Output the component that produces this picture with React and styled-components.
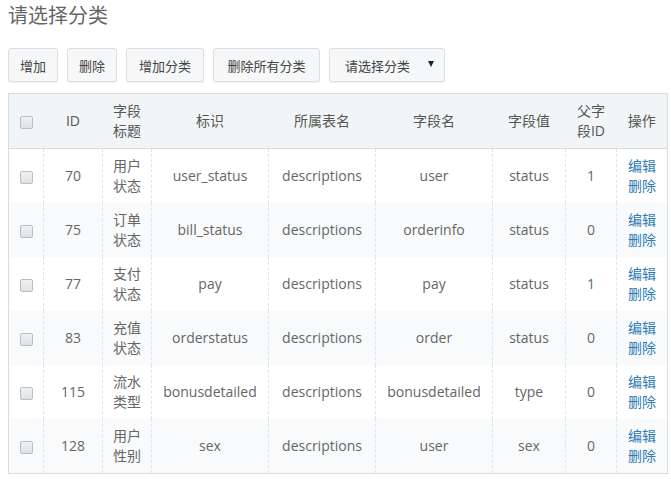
import React from "react";
import styled, { createGlobalStyle } from "styled-components";

const Global = createGlobalStyle`
  body {
    margin: 0;
    background: #fff;
    font-family: "Open Sans", "Noto Sans CJK SC", sans-serif;
    color: #666;
  }
`;

const Page = styled.div`
  padding: 0 8px;
`;

const Title = styled.h2`
  margin: 4px 0 0;
  font-size: 20px;
  line-height: 24px;
  font-weight: normal;
  color: #666;
`;

const Toolbar = styled.div`
  display: flex;
  gap: 9px;
  margin-top: 20px;
`;

const Button = styled.div`
  box-sizing: border-box;
  height: 34px;
  width: ${(p) => p.w}px;
  display: flex;
  align-items: center;
  justify-content: center;
  background: #f6f7f8;
  border: 1px solid #dcdfe2;
  border-radius: 3px;
  box-shadow: 0 1px 1px rgba(0, 0, 0, 0.06);
  font-size: 13px;
  color: #444;
`;

const Select = styled(Button)`
  justify-content: space-between;
  padding: 0 10px 0 15px;
`;

const Caret = styled.span`
  width: 0;
  height: 0;
  border-left: 3px solid transparent;
  border-right: 3px solid transparent;
  border-top: 6px solid #222;
  margin-top: -2px;
`;

const Table = styled.table`
  margin-top: 11px;
  width: 659px;
  table-layout: fixed;
  border-collapse: collapse;
  border: 1px solid #d5dde2;
  font-size: 14px;
`;

const Th = styled.th`
  height: 54px;
  background: #f1f5f7;
  border-bottom: 1px solid #d5dde2;
  font-weight: normal;
  color: #555;
  line-height: 20px;
  text-align: center;
  padding: 0;
`;

const Row = styled.tr`
  background: ${(p) => (p.$odd ? "#f8fafb" : "#fff")};
`;

const Td = styled.td`
  height: 54px;
  padding: 0;
  text-align: center;
  color: #666;
  line-height: 20px;
  border-left: 1px dashed #e2e6e9;
  &:first-child {
    border-left: none;
  }
`;

const Check = styled.span`
  display: inline-block;
  width: 11px;
  height: 11px;
  border: 1px solid #b9bec2;
  border-radius: 2px;
  background: linear-gradient(#f0f1f2, #dfe2e4);
  vertical-align: middle;
`;

const Link = styled.a`
  display: block;
  color: #2f7bb5;
  text-decoration: none;
`;

const rows = [
  ["70", "用户", "状态", "user_status", "descriptions", "user", "status", "1"],
  ["75", "订单", "状态", "bill_status", "descriptions", "orderinfo", "status", "0"],
  ["77", "支付", "状态", "pay", "descriptions", "pay", "status", "1"],
  ["83", "充值", "状态", "orderstatus", "descriptions", "order", "status", "0"],
  ["115", "流水", "类型", "bonusdetailed", "descriptions", "bonusdetailed", "type", "0"],
  ["128", "用户", "性别", "sex", "descriptions", "user", "sex", "0"],
];

const widths = [35, 59, 49, 117, 107, 117, 73, 51, 51];

export default function App() {
  return (
    <Page>
      <Global />
      <Title>请选择分类</Title>
      <Toolbar>
        <Button w={50}>增加</Button>
        <Button w={50}>删除</Button>
        <Button w={78}>增加分类</Button>
        <Button w={107}>删除所有分类</Button>
        <Select w={116}>
          请选择分类<Caret />
        </Select>
      </Toolbar>
      <Table>
        <colgroup>
          {widths.map((w, i) => (
            <col key={i} style={{ width: w }} />
          ))}
        </colgroup>
        <thead>
          <tr>
            <Th><Check /></Th>
            <Th>ID</Th>
            <Th>字段<br />标题</Th>
            <Th>标识</Th>
            <Th>所属表名</Th>
            <Th>字段名</Th>
            <Th>字段值</Th>
            <Th>父字<br />段ID</Th>
            <Th>操作</Th>
          </tr>
        </thead>
        <tbody>
          {rows.map((r, i) => (
            <Row key={r[0]} $odd={i % 2 === 1}>
              <Td><Check /></Td>
              <Td>{r[0]}</Td>
              <Td>{r[1]}<br />{r[2]}</Td>
              <Td>{r[3]}</Td>
              <Td>{r[4]}</Td>
              <Td>{r[5]}</Td>
              <Td>{r[6]}</Td>
              <Td>{r[7]}</Td>
              <Td>
                <Link>编辑</Link>
                <Link>删除</Link>
              </Td>
            </Row>
          ))}
        </tbody>
      </Table>
    </Page>
  );
}
